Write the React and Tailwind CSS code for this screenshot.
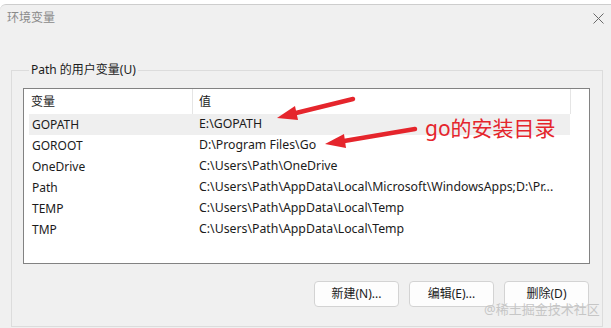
import React from 'react';

const rows = [
  { name: 'GOPATH', value: 'E:\\GOPATH', selected: true },
  { name: 'GOROOT', value: 'D:\\Program Files\\Go' },
  { name: 'OneDrive', value: 'C:\\Users\\Path\\OneDrive' },
  { name: 'Path', value: 'C:\\Users\\Path\\AppData\\Local\\Microsoft\\WindowsApps;D:\\Pr...' },
  { name: 'TEMP', value: 'C:\\Users\\Path\\AppData\\Local\\Temp' },
  { name: 'TMP', value: 'C:\\Users\\Path\\AppData\\Local\\Temp' },
];

function Button({ children }) {
  return (
    <button className="w-[85px] h-[26px] rounded-[4px] border border-[#d3d3d3] bg-[#fdfdfd] text-[12px] text-[#1b1b1b] flex items-center justify-center">
      {children}
    </button>
  );
}

export default function App() {
  return (
    <div className="relative w-[611px] h-[328px] overflow-hidden bg-white font-['Noto_Sans','Noto_Sans_CJK_SC',sans-serif] text-[12px] text-[#1b1b1b]">
      <div className="mt-[4px] h-[324px] bg-[#f0f0f0] border-t border-[#cdcdcd] rounded-tl-[6px] flex flex-col">
        {/* title bar */}
        <div className="h-[26px] flex items-center justify-between pl-[7px] pr-[7px]">
          <span className="text-[12px] text-[#8a8a8a]">环境变量</span>
          <svg width="11" height="11" viewBox="0 0 11 11" className="mt-[1px]">
            <path d="M0.5 0.5 L10.5 10.5 M10.5 0.5 L0.5 10.5" stroke="#6a6a6a" strokeWidth="1" />
          </svg>
        </div>

        {/* group box */}
        <fieldset className="mt-[30px] ml-[11px] mr-[8px] h-[266px] border border-[#dcdcdc] pl-[11px] pr-[12px]">
          <legend className="ml-[6px] px-[2px] leading-[18px] text-[12px]">Path 的用户变量(U)</legend>

          <div className="mt-[9px] h-[176px] bg-white border border-[#828282]">
            <div className="flex h-[25px]">
              <div className="w-[169px] pl-[7px] border-r border-[#e5e5e5] flex items-center">变量</div>
              <div className="w-[378px] pl-[6px] border-r border-[#e5e5e5] flex items-center">值</div>
            </div>
            <div className="pl-[5px]">
              {rows.map((r) => (
                <div
                  key={r.name}
                  className={`w-[541px] h-[21px] flex items-center ${r.selected ? 'bg-[#efefef]' : ''}`}
                >
                  <div className="w-[170px] pl-[3px] whitespace-nowrap">{r.name}</div>
                  <div className="flex-1 whitespace-nowrap overflow-hidden text-[12.3px]">{r.value}</div>
                </div>
              ))}
            </div>
          </div>

          <div className="mt-[17px] flex justify-end gap-[10px] pr-[1px]">
            <Button>新建(N)...</Button>
            <Button>编辑(E)...</Button>
            <Button>删除(D)</Button>
          </div>
        </fieldset>
      </div>

      {/* annotation */}
      <svg className="absolute left-0 top-0 pointer-events-none" width="611" height="328">
        <line x1="353" y1="99" x2="296" y2="113" stroke="#e5252c" strokeWidth="4.5" strokeLinecap="round" />
        <polygon points="277,118 298,120 295,106" fill="#e5252c" />
        <line x1="415" y1="129" x2="344" y2="141" stroke="#e5252c" strokeWidth="4.5" strokeLinecap="round" />
        <polygon points="325,144 346,148 344,134" fill="#e5252c" />
      </svg>
      <span className="absolute left-[425px] top-[114px] text-[21px] leading-[28px] text-[#e5252c] whitespace-nowrap">
        go的安装目录
      </span>
      <span className="absolute left-[484px] top-[300px] text-[13px] leading-[18px] text-[#c6c6c6] whitespace-nowrap">
        @稀土掘金技术社区
      </span>
    </div>
  );
}
